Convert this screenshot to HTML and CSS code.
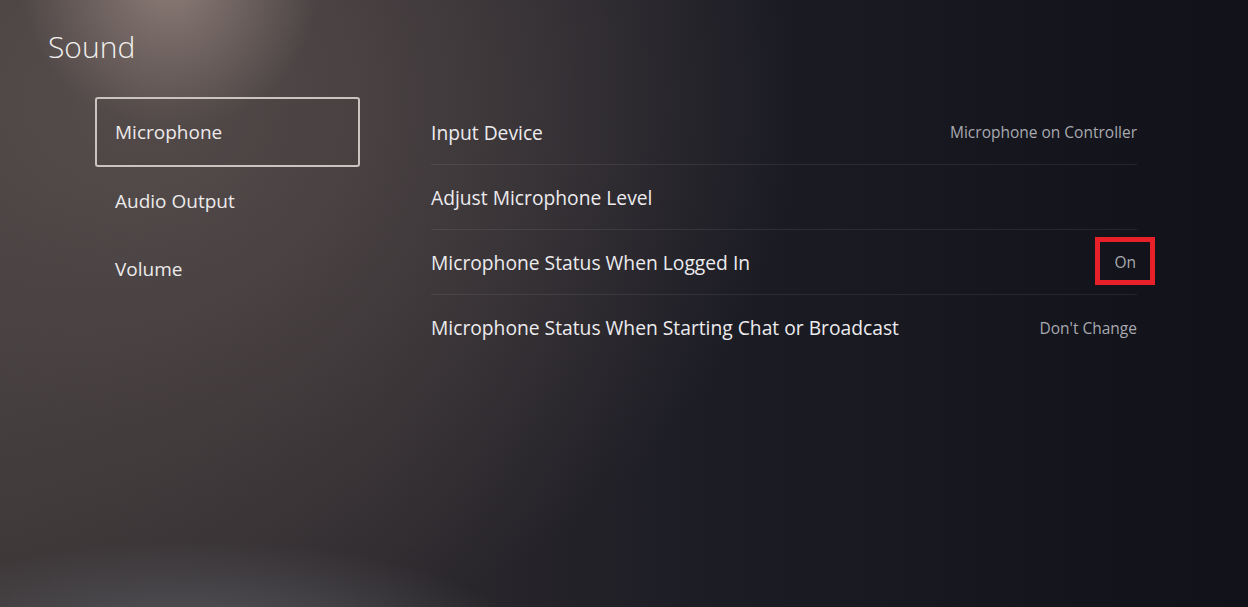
FILE: index.html
```html
<!DOCTYPE html>
<html>
<head>
<meta charset="utf-8">
<link rel="stylesheet" href="styles.css">
</head>
<body>
<div class="screen">
  <h1 class="title">Sound</h1>
  <div class="content">
    <nav class="menu">
      <div class="menu-item selected">Microphone</div>
      <div class="menu-item">Audio Output</div>
      <div class="menu-item">Volume</div>
    </nav>
    <div class="list">
      <div class="row"><span class="label">Input Device</span><span class="value">Microphone on Controller</span></div>
      <div class="row"><span class="label">Adjust Microphone Level</span></div>
      <div class="row"><span class="label">Microphone Status When Logged In</span><span class="value highlight">On</span></div>
      <div class="row last"><span class="label">Microphone Status When Starting Chat or Broadcast</span><span class="value">Don't Change</span></div>
    </div>
  </div>
</div>
</body>
</html>
```

FILE: styles.css
```css
html, body {
  margin: 0;
  padding: 0;
}
body {
  width: 1248px;
  height: 607px;
  overflow: hidden;
  font-family: "Open Sans", "Noto Sans", sans-serif;
  color: #e6e6e8;
}
.screen {
  width: 1248px;
  height: 607px;
  box-sizing: border-box;
  padding: 27px 0 0 48px;
  background:
    radial-gradient(ellipse 150px 150px at 170px -20px, rgba(155,137,130,0.8), rgba(155,137,130,0) 100%),
    radial-gradient(ellipse 330px 110px at 200px 650px, rgba(95,98,106,0.8), rgba(95,98,106,0) 100%),
    radial-gradient(ellipse 650px 560px at 150px 100px, rgba(90,80,79,0.9), rgba(90,80,79,0) 100%),
    linear-gradient(90deg, #3a3536 0%, #2e2a2e 30%, #1d1d25 55%, #15161e 80%, #111219 100%);
}
.title {
  margin: 0;
  font-weight: 300;
  font-size: 30px;
  line-height: 40px;
  letter-spacing: 0;
  color: #f2f0ee;
}
.content {
  display: flex;
  margin-top: 30px;
}
.menu {
  width: 265px;
  margin-left: 47px;
  display: flex;
  flex-direction: column;
}
.menu-item {
  height: 68px;
  box-sizing: border-box;
  padding-left: 18px;
  display: flex;
  align-items: center;
  font-size: 19px;
  font-weight: 400;
  color: #eceaea;
  border: 2px solid transparent;
}
.menu-item.selected {
  height: 70px;
  border-color: #cbc3c0;
  border-radius: 3px;
  background: rgba(70,62,62,0.25);
}
.list {
  margin-left: 71px;
  padding-top: 3px;
  width: 706px;
  display: flex;
  flex-direction: column;
}
.row {
  height: 65px;
  box-sizing: border-box;
  display: flex;
  align-items: center;
  justify-content: space-between;
  border-bottom: 1px solid rgba(255,255,255,0.08);
}
.row.last {
  border-bottom: none;
}
.label {
  font-size: 19.25px;
  color: #ecebee;
  font-weight: 400;
}
.value {
  font-size: 15.5px;
  color: #a9a9b0;
}
.highlight {
  position: relative;
  margin-right: 1px;
}
.highlight::after {
  content: "";
  position: absolute;
  left: -19px;
  top: -14px;
  width: 50px;
  height: 38px;
  border: 5px solid #e8202a;
}
```
